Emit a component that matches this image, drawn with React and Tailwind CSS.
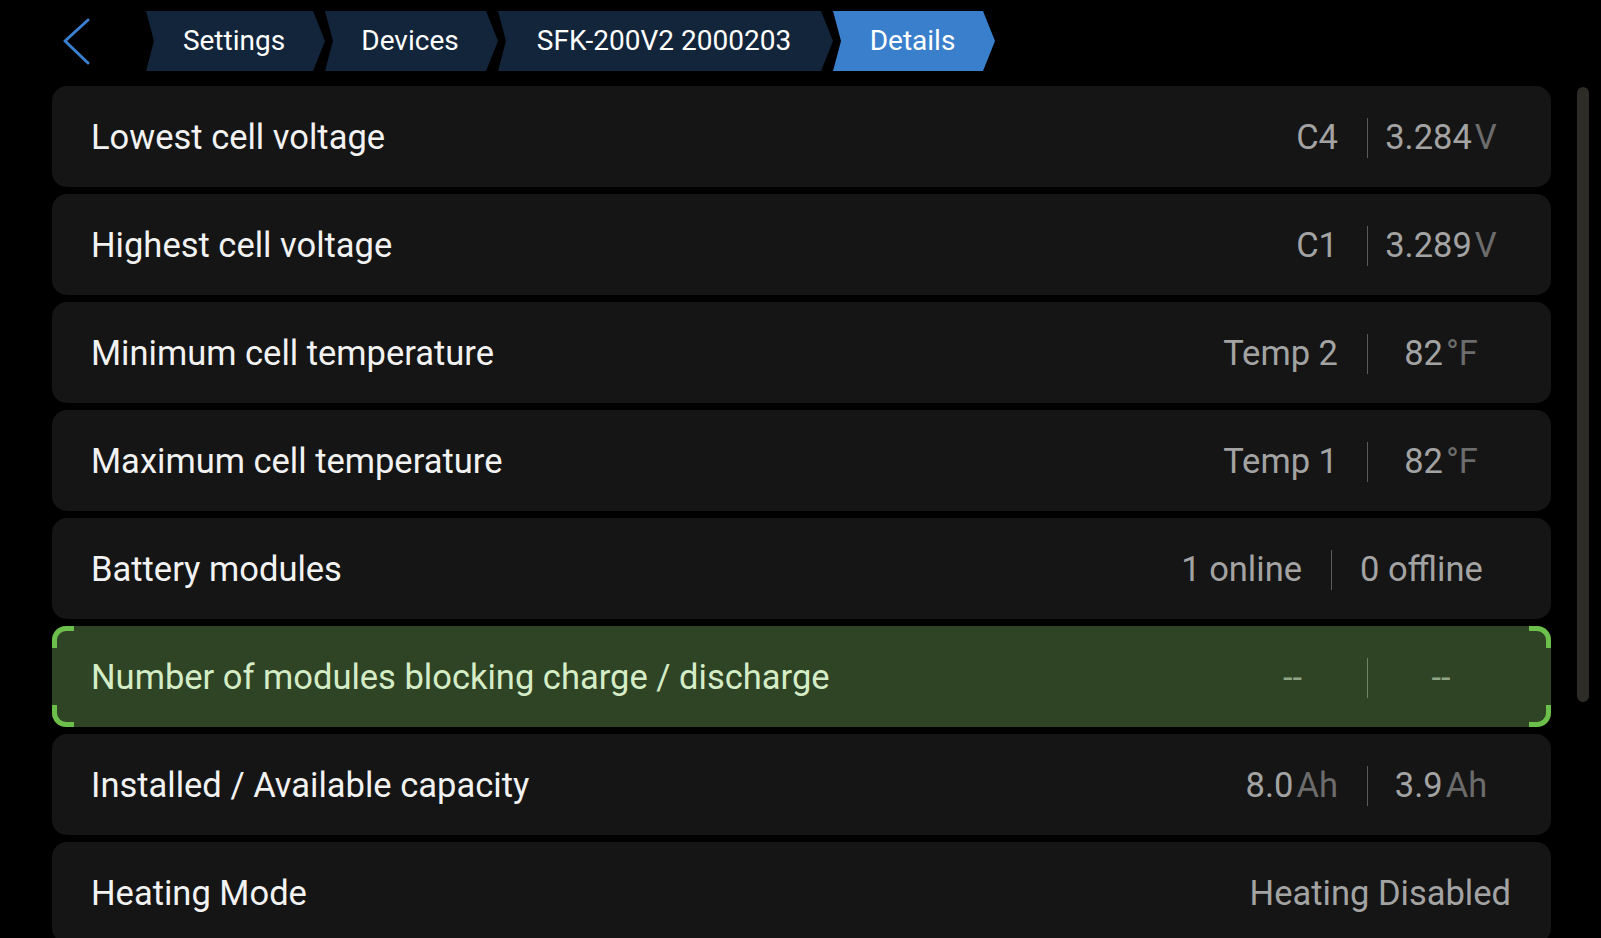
import { Fragment } from 'react';

const crumbs = [
  { label: 'Settings', width: 'w-[179px]', active: false },
  { label: 'Devices', width: 'w-[173px]', active: false },
  { label: 'SFK-200V2 2000203', width: 'w-[335px]', active: false },
  { label: 'Details', width: 'w-[162px]', active: true },
];

const Unit = ({ value, unit }) => (
  <span>
    {value}
    <span className="ml-[3px] text-[#6c6c6c]">{unit}</span>
  </span>
);

const rows = [
  { label: 'Lowest cell voltage', left: 'C4', right: <Unit value="3.284" unit="V" /> },
  { label: 'Highest cell voltage', left: 'C1', right: <Unit value="3.289" unit="V" /> },
  { label: 'Minimum cell temperature', left: 'Temp 2', right: <Unit value="82" unit="°F" /> },
  { label: 'Maximum cell temperature', left: 'Temp 1', right: <Unit value="82" unit="°F" /> },
  { label: 'Battery modules', left: '1 online', right: '0 offline', wide: true },
  { label: 'Number of modules blocking charge / discharge', left: '--', right: '--', selected: true },
  { label: 'Installed / Available capacity', left: <Unit value="8.0" unit="Ah" />, right: <Unit value="3.9" unit="Ah" /> },
  { label: 'Heating Mode', single: 'Heating Disabled' },
];

const Brackets = () => (
  <>
    <div className="absolute left-0 top-0 h-[22px] w-[22px] rounded-tl-[14px] border-l-[5px] border-t-[5px] border-[#6cbf4a]" />
    <div className="absolute right-0 top-0 h-[22px] w-[22px] rounded-tr-[14px] border-r-[5px] border-t-[5px] border-[#6cbf4a]" />
    <div className="absolute bottom-0 left-0 h-[22px] w-[22px] rounded-bl-[14px] border-b-[5px] border-l-[5px] border-[#6cbf4a]" />
    <div className="absolute bottom-0 right-0 h-[22px] w-[22px] rounded-br-[14px] border-b-[5px] border-r-[5px] border-[#6cbf4a]" />
  </>
);

const Row = ({ label, left, right, single, wide, selected }) => (
  <div
    className={`relative flex h-[101px] shrink-0 items-center rounded-[15px] pl-[39px] pt-[3px] text-[34.5px] ${
      selected ? 'bg-[#2f4325]' : 'bg-[#151515]'
    }`}
  >
    {selected && <Brackets />}
    <span className={`flex-1 ${selected ? 'text-[#d5edc7]' : 'text-[#f2f2f2]'}`}>{label}</span>
    {single ? (
      <span className="pr-[40px] text-[#a3a3a3]">{single}</span>
    ) : (
      <div className={`flex items-center ${selected ? 'text-[#8fa585]' : 'text-[#a3a3a3]'}`}>
        <span className={selected ? 'mr-[65px]' : 'mr-[29px]'}>{left}</span>
        <div className={`h-[40px] w-px ${selected ? 'bg-[#6f8366]' : 'bg-[#5a5a5a]'}`} />
        <span className={wide ? 'mr-[38px] w-[181px] pl-[28px] text-left' : 'mr-[37px] w-[146px] text-center'}>
          {right}
        </span>
      </div>
    )}
  </div>
);

export default function App() {
  return (
    <div className="h-[938px] w-[1601px] overflow-hidden bg-black font-['Roboto',sans-serif]">
      <div className="flex h-[60px] items-center pl-[62px] mt-[11px]">
        <svg width="30" height="48" viewBox="0 0 30 48" className="shrink-0">
          <path d="M26 3 L3 24 L26 46" fill="none" stroke="#3b80cf" strokeWidth="3" strokeLinecap="round" strokeLinejoin="round" />
        </svg>
        <div className="ml-[54px] flex h-full">
          {crumbs.map((c) => (
            <Fragment key={c.label}>
              <div
                className={`flex h-full items-center justify-center pl-[9px] pr-[12px] text-[28px] text-white [clip-path:polygon(0_0,calc(100%_-_12px)_0,100%_50%,calc(100%_-_12px)_100%,0_100%,8px_50%)] ${c.width} ${
                  c.active ? 'bg-[#3a7fcb]' : 'bg-[#13253b]'
                }`}
              >
                {c.label}
              </div>
            </Fragment>
          ))}
        </div>
      </div>
      <div className="mt-[15px] flex">
        <div className="ml-[52px] flex w-[1499px] flex-col gap-[7px]">
          {rows.map((r) => (
            <Row key={r.label} {...r} />
          ))}
        </div>
        <div className="ml-[26px] mt-[1px] h-[615px] w-[12px] rounded-full bg-[#2d2c27]" />
      </div>
    </div>
  );
}
